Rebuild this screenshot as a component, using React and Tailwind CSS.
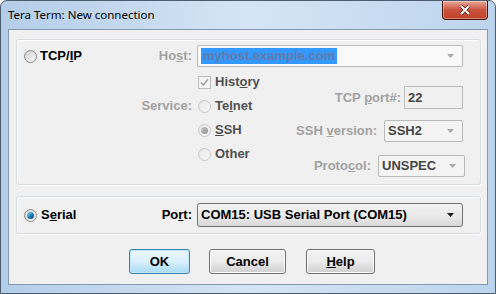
import React from 'react';

function Radio({ checked = false, disabled = false }) {
    return (
        <span
            className={
                disabled
                    ? 'inline-flex h-[13px] w-[13px] shrink-0 items-center justify-center rounded-full border border-[#c8c8c8] bg-gradient-to-br from-[#e6e6e6] to-[#fafafa]'
                    : 'inline-flex h-[13px] w-[13px] shrink-0 items-center justify-center rounded-full border border-[#8a8a8a] bg-gradient-to-br from-[#cfcfcf] to-[#fbfbfb]'
            }
        >
            {checked && (
                <span
                    className={
                        disabled
                            ? 'h-[7px] w-[7px] rounded-full bg-gradient-to-br from-[#c9c9c9] to-[#8f8f8f]'
                            : 'h-[7px] w-[7px] rounded-full bg-gradient-to-br from-[#9fdcf8] via-[#1f86c0] to-[#0a3c6c]'
                    }
                />
            )}
        </span>
    );
}

function Arrow({ disabled = false }) {
    return (
        <svg width="7" height="4" viewBox="0 0 7 4" className="shrink-0">
            <path d="M0 0h7L3.5 4z" fill={disabled ? '#a8a8a8' : '#1a1a1a'} />
        </svg>
    );
}

function DisabledSelect({ value, className }) {
    return (
        <div className={`flex h-[22px] items-center justify-between rounded-[2px] border border-[#b9b9b9] bg-[#f4f4f4] pl-[3px] pr-[8px] ${className}`}>
            <span className="text-[#444]">{value}</span>
            <Arrow disabled />
        </div>
    );
}

export default function App() {
    return (
        <div className="relative h-[294px] w-[496px] overflow-hidden rounded-t-[7px] border border-[#4d5d70] bg-gradient-to-r from-[#b4cde8] via-[#d5e5f5] to-[#bcd4ec] px-[7px] font-['Liberation_Sans',Arial,sans-serif] text-[13px] font-bold text-black">
            {/* title bar */}
            <div className="flex h-[28px] items-center pb-[1px] font-['Noto_Sans',sans-serif] text-[11.5px] font-normal text-black">
                Tera Term: New connection
            </div>
            <div className="absolute right-[7px] top-0 flex h-[19px] w-[46px] items-center justify-center rounded-b-[4px] border border-t-0 border-[#4a1610] bg-gradient-to-b from-[#e8a99b] via-[#c9513d] to-[#c2412b] shadow-[inset_0_0_0_1px_rgba(255,255,255,0.35)]">
                <svg width="12" height="10" viewBox="0 0 12 10">
                    <path d="M2 1l8 8M10 1L2 9" stroke="#4a1610" strokeWidth="3.4" />
                    <path d="M2 1l8 8M10 1L2 9" stroke="#ffffff" strokeWidth="2" />
                </svg>
            </div>

            {/* client area */}
            <div className="h-[256px] border border-[#8597ad] bg-[#f0f0f0] pl-[7px] pt-[9px]">
                {/* TCP/IP group */}
                <div className="h-[146px] w-[465px] rounded-[3px] border border-[#d5dadf] pl-[7px] pt-[5px] shadow-[inset_1px_1px_0_#ffffff,1px_1px_0_#ffffff]">
                    <div className="flex h-[22px] items-center">
                        <div className="flex w-[168px] items-center justify-between">
                            <div className="flex items-center">
                                <Radio />
                                <span className="ml-[3px]">TCP/<span className="underline">I</span>P</span>
                            </div>
                            <span className="text-[#a2a2a2]">Ho<span className="underline">s</span>t:</span>
                        </div>
                        <div className="ml-[5px] flex h-[22px] w-[266px] items-center justify-between rounded-[2px] border border-[#b9b9b9] bg-[#f9f9f9] pl-[3px] pr-[8px]">
                            <span className="bg-[#3399ff] px-[2px] leading-[16px] text-[#637aa6]">myhost.example.com</span>
                            <Arrow disabled />
                        </div>
                    </div>

                    <div className="mt-[3px] flex">
                        <div className="flex w-[168px] flex-col">
                            <div className="h-[24px]" />
                            <div className="flex h-[24px] items-center justify-end text-[#a2a2a2]">Service:</div>
                            <div className="h-[24px]" />
                            <div className="h-[24px]" />
                        </div>
                        <div className="ml-[5px] flex w-[90px] flex-col text-[#505050]">
                            <div className="flex h-[24px] items-center">
                                <span className="ml-[1px] flex h-[13px] w-[13px] items-center justify-center border border-[#bcbcbc] bg-[#f4f4f4]">
                                    <svg width="9" height="9" viewBox="0 0 9 9">
                                        <path d="M1 4.5l2.3 2.6L8 1.2" fill="none" stroke="#a6a6a6" strokeWidth="1.6" />
                                    </svg>
                                </span>
                                <span className="ml-[4px]">Hist<span className="underline">o</span>ry</span>
                            </div>
                            <div className="flex h-[24px] items-center pl-[1px]">
                                <Radio disabled />
                                <span className="ml-[4px]">Te<span className="underline">l</span>net</span>
                            </div>
                            <div className="flex h-[24px] items-center pl-[1px]">
                                <Radio disabled checked />
                                <span className="ml-[4px]"><span className="underline">S</span>SH</span>
                            </div>
                            <div className="flex h-[24px] items-center pl-[1px]">
                                <Radio disabled />
                                <span className="ml-[4px]">Other</span>
                            </div>
                        </div>
                        <div className="flex w-[178px] flex-col items-end pt-[16px]">
                            <div className="mr-[2px] flex h-[23px] items-center">
                                <span className="mr-[3px] text-[#a2a2a2]">TCP <span className="underline">p</span>ort#:</span>
                                <div className="flex h-[23px] w-[59px] items-center border border-[#bdbdbd] bg-[#f0f0f0] pl-[3px] text-[#444]">22</div>
                            </div>
                            <div className="mr-[2px] mt-[11px] flex h-[22px] items-center">
                                <span className="mr-[7px] text-[#a2a2a2]">SSH <span className="underline">v</span>ersion:</span>
                                <DisabledSelect value="SSH2" className="w-[79px]" />
                            </div>
                            <div className="mt-[13px] flex h-[22px] items-center">
                                <span className="mr-[7px] text-[#a2a2a2]">Proto<span className="underline">c</span>ol:</span>
                                <DisabledSelect value="UNSPEC" className="w-[87px]" />
                            </div>
                        </div>
                    </div>
                </div>

                {/* Serial group */}
                <div className="mt-[11px] flex h-[38px] w-[465px] items-center rounded-[3px] border border-[#d5dadf] pl-[7px] shadow-[inset_1px_1px_0_#ffffff,1px_1px_0_#ffffff]">
                    <div className="flex w-[168px] items-center justify-between">
                        <div className="flex items-center">
                            <Radio checked />
                            <span className="ml-[4px]">S<span className="underline">e</span>rial</span>
                        </div>
                        <span>Po<span className="underline">r</span>t:</span>
                    </div>
                    <div className="ml-[5px] flex h-[24px] w-[266px] items-center justify-between rounded-[3px] border border-[#707070] bg-gradient-to-b from-[#f2f2f2] via-[#ebebeb] to-[#d9d9d9] pl-[3px] pr-[8px]">
                        <span>COM15: USB Serial Port (COM15)</span>
                        <Arrow />
                    </div>
                </div>

                {/* buttons */}
                <div className="mt-[15px] flex pl-[113px]">
                    <button className="flex h-[25px] w-[61px] items-center justify-center rounded-[3px] border border-[#3c7fb1] bg-gradient-to-b from-[#eaf6fd] via-[#d9f0fc] to-[#a7d9f5] shadow-[inset_0_0_0_1px_#bfe6fa]">
                        OK
                    </button>
                    <button className="ml-[19px] flex h-[25px] w-[77px] items-center justify-center rounded-[3px] border border-[#707070] bg-gradient-to-b from-[#f2f2f2] via-[#ebebeb] to-[#cfcfcf] shadow-[inset_0_0_0_1px_#fcfcfc]">
                        Cancel
                    </button>
                    <button className="ml-[20px] flex h-[25px] w-[69px] items-center justify-center rounded-[3px] border border-[#707070] bg-gradient-to-b from-[#f2f2f2] via-[#ebebeb] to-[#cfcfcf] shadow-[inset_0_0_0_1px_#fcfcfc]">
                        <span><span className="underline">H</span>elp</span>
                    </button>
                </div>
            </div>
        </div>
    );
}
